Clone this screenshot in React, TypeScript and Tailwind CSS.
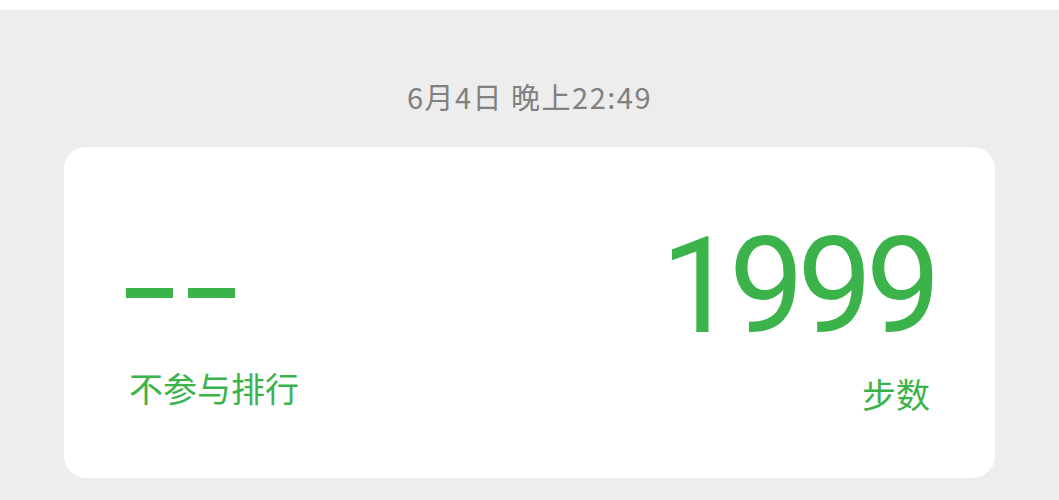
import React from 'react';

const green = 'text-[#3bb34a]';

const App: React.FC = () => {
  return (
    <div
      className="w-full h-[500px] bg-[#ededed] flex flex-col overflow-hidden"
      style={{ fontFamily: '"Noto Sans CJK SC", "Noto Sans", sans-serif' }}
    >
      <div className="h-[11px] bg-white border-b border-[#e8e8e8]" />

      <div className="mt-[71px] text-center text-[29px] leading-none tracking-[1.5px] text-[#808080]">
        6月4日 晚上22:49
      </div>

      <div className="mt-[36px] mx-[64px] h-[331px] bg-white rounded-[22px] px-[65px] flex justify-between">
        <div className="flex flex-col pt-[141px]">
          <div className="flex gap-[15px] -ml-[3px]">
            <div className="w-[47px] h-[10px] bg-[#3bb34a]" />
            <div className="w-[47px] h-[10px] bg-[#3bb34a]" />
          </div>
          <div className={`mt-[73px] text-[34px] leading-none ${green}`}>不参与排行</div>
        </div>

        <div className="flex flex-col items-end pt-[73px]">
          <div
            className={`text-[134px] leading-none tracking-[-7px] ${green} -mr-[4px]`}
            style={{ fontFamily: 'Roboto, "Noto Sans", sans-serif' }}
          >
            1999
          </div>
          <div className={`mt-[23px] text-[34px] leading-none ${green}`}>步数</div>
        </div>
      </div>
    </div>
  );
};

export default App;
